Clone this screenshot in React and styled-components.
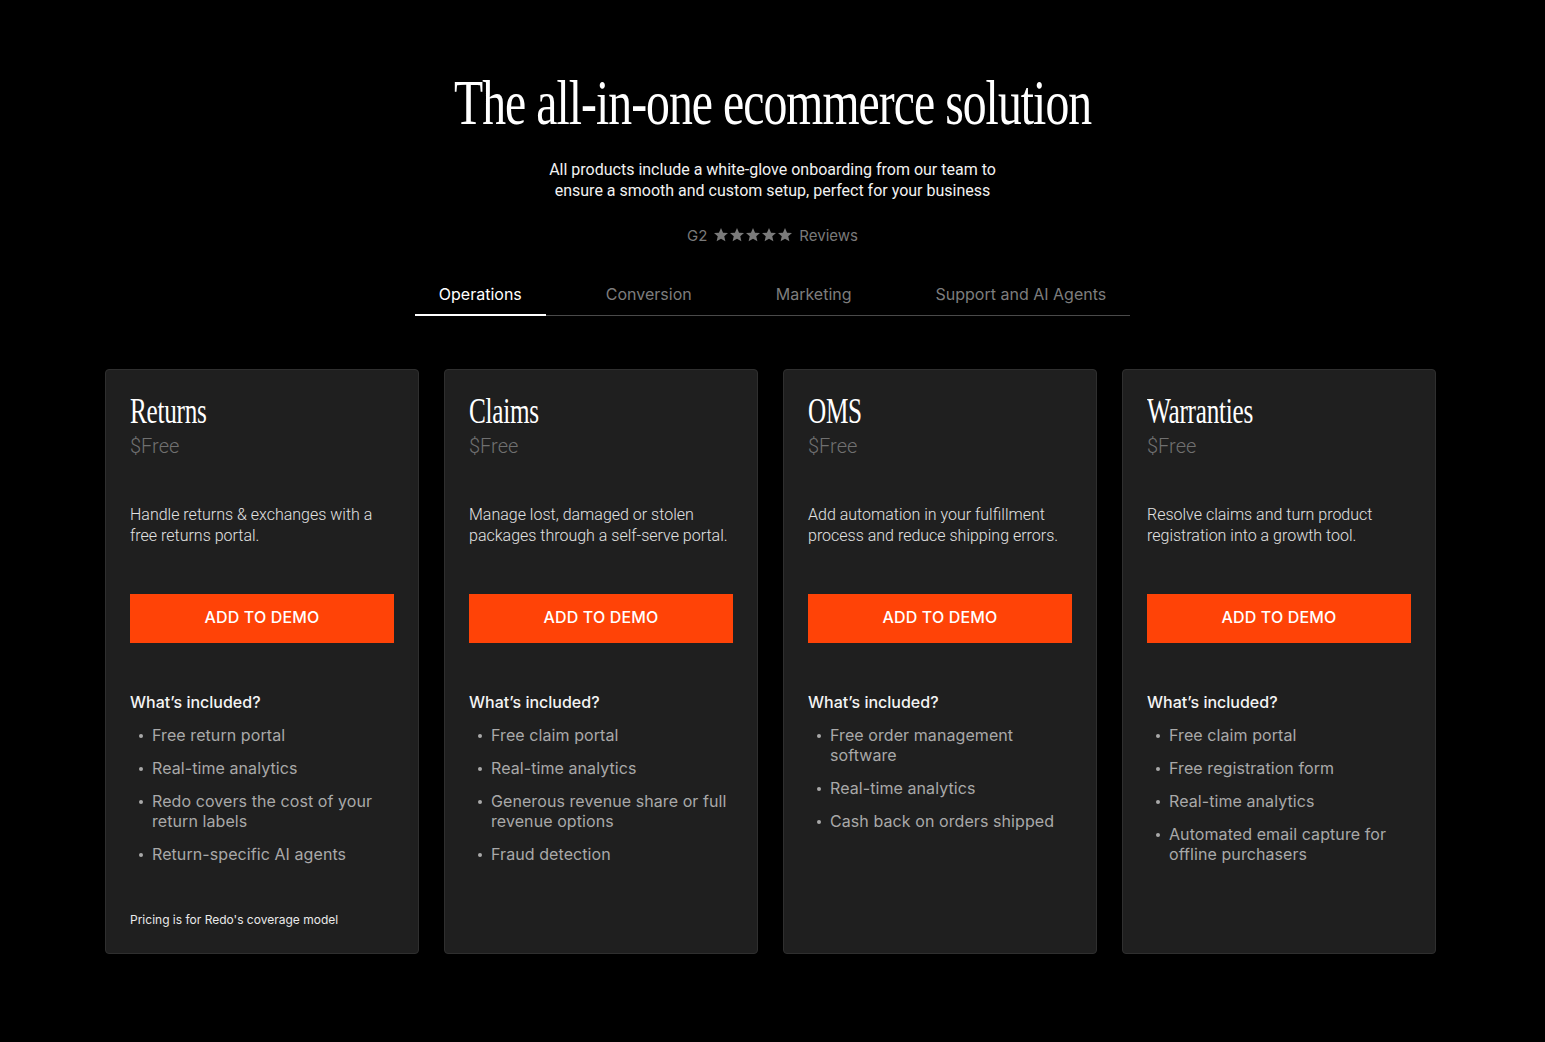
import React from "react";
import styled, { createGlobalStyle } from "styled-components";

const GlobalStyle = createGlobalStyle`
  html, body {
    margin: 0;
    padding: 0;
    background: #000;
  }
  * {
    box-sizing: border-box;
  }
`;

const Page = styled.main`
  min-height: 1042px;
  background: #000;
  padding-top: 68px;
  display: flex;
  flex-direction: column;
  align-items: center;
`;

const Title = styled.h1`
  margin: 0;
  font-family: "Liberation Serif", "DejaVu Serif", serif;
  font-weight: 400;
  font-size: 64px;
  line-height: 70px;
  color: #fff;
  letter-spacing: -0.02em;
  white-space: nowrap;
  transform: scaleX(0.745);
`;

const Subtitle = styled.p`
  margin: 21px 0 0;
  font-family: Roboto, "Liberation Sans", sans-serif;
  font-size: 16px;
  line-height: 21px;
  color: #f2f2f2;
  text-align: center;
`;

const Rating = styled.div`
  margin-top: 24px;
  height: 20px;
  display: flex;
  align-items: center;
  gap: 6px;
  font-family: Inter, "Liberation Sans", sans-serif;
  font-size: 15px;
  color: #7a7a7a;
`;

const Stars = styled.span`
  display: flex;
  gap: 0;
`;

const Tabs = styled.nav`
  margin-top: 39px;
  display: flex;
  gap: 36px;
  border-bottom: 1px solid #4a4a4a;
`;

const Tab = styled.button`
  all: unset;
  cursor: pointer;
  padding: 0 24px 10px;
  margin-bottom: -1px;
  font-family: Inter, "Liberation Sans", sans-serif;
  font-size: 16px;
  line-height: 20px;
  color: ${p => (p.$active ? "#fff" : "#7d7d7d")};
  border-bottom: 2px solid ${p => (p.$active ? "#fff" : "transparent")};
`;

const Grid = styled.section`
  margin: 53px 4px 0 0;
  display: grid;
  grid-template-columns: repeat(4, 314px);
  gap: 25px;
`;

const Card = styled.article`
  display: flex;
  flex-direction: column;
  padding: 24px 24px 25px;
  background: #1f1f1f;
  border: 1px solid #2f2f2f;
  border-radius: 4px;
`;

const Name = styled.h2`
  margin: 0;
  font-family: "Liberation Serif", "DejaVu Serif", serif;
  font-weight: 400;
  font-size: 36px;
  line-height: 34px;
  color: #fff;
  letter-spacing: -0.01em;
  transform: scaleX(0.7);
  transform-origin: left center;
`;

const Price = styled.div`
  margin-top: 6px;
  font-family: Roboto, "Liberation Sans", sans-serif;
  font-weight: 300;
  font-size: 20px;
  line-height: 24px;
  color: #707070;
`;

const Blurb = styled.p`
  margin: 46px 0 0;
  font-family: Roboto, "Liberation Sans", sans-serif;
  font-weight: 300;
  font-size: 16px;
  line-height: 21px;
  color: #e2e2e2;
  min-height: 42px;
`;

const DemoButton = styled.button`
  all: unset;
  box-sizing: border-box;
  cursor: pointer;
  margin-top: 48px;
  height: 49px;
  padding-bottom: 3px;
  display: flex;
  align-items: center;
  justify-content: center;
  background: #ff4307;
  color: #fff;
  font-family: Inter, "Liberation Sans", sans-serif;
  font-weight: 500;
  font-size: 16px;
  letter-spacing: 0.01em;
`;

const Included = styled.h3`
  margin: 47px 0 0;
  font-family: Inter, "Liberation Sans", sans-serif;
  font-weight: 500;
  font-size: 16px;
  line-height: 24px;
  color: #f4f4f4;
`;

const Features = styled.ul`
  margin: 11px 0 0;
  padding: 0;
  list-style: none;
  display: flex;
  flex-direction: column;
  gap: 13px;
`;

const Feature = styled.li`
  display: flex;
  align-items: flex-start;
  font-family: Inter, "Liberation Sans", sans-serif;
  font-size: 16px;
  line-height: 20px;
  letter-spacing: 0.005em;
  color: #a9a9a9;

  &::before {
    content: "";
    flex: none;
    width: 4px;
    height: 4px;
    margin: 9px 9px 0 9px;
    border-radius: 50%;
    background: #a9a9a9;
  }
`;

const Footnote = styled.p`
  margin: auto 0 0;
  padding-top: 48px;
  font-family: Inter, "Liberation Sans", sans-serif;
  font-size: 12px;
  line-height: 16px;
  color: #eaeaea;
`;

const Star = () => (
  <svg width="16" height="16" viewBox="0 0 24 24" fill="#7a7a7a">
    <path d="M12 1.5l3.09 7.03 7.41.6-5.63 4.86 1.7 7.51L12 17.6l-6.57 3.9 1.7-7.51L1.5 9.13l7.41-.6z" />
  </svg>
);

const tabs = ["Operations", "Conversion", "Marketing", "Support and AI Agents"];

const products = [
  {
    name: "Returns",
    blurb: "Handle returns & exchanges with a free returns portal.",
    features: [
      "Free return portal",
      "Real-time analytics",
      "Redo covers the cost of your return labels",
      "Return-specific AI agents",
    ],
    note: "Pricing is for Redo's coverage model",
  },
  {
    name: "Claims",
    blurb: "Manage lost, damaged or stolen packages through a self-serve portal.",
    features: [
      "Free claim portal",
      "Real-time analytics",
      "Generous revenue share or full revenue options",
      "Fraud detection",
    ],
  },
  {
    name: "OMS",
    blurb: "Add automation in your fulfillment process and reduce shipping errors.",
    features: [
      "Free order management software",
      "Real-time analytics",
      "Cash back on orders shipped",
    ],
  },
  {
    name: "Warranties",
    blurb: "Resolve claims and turn product registration into a growth tool.",
    features: [
      "Free claim portal",
      "Free registration form",
      "Real-time analytics",
      "Automated email capture for offline purchasers",
    ],
  },
];

export default function App() {
  return (
    <>
      <GlobalStyle />
      <Page>
        <Title>The all-in-one ecommerce solution</Title>
        <Subtitle>
          All products include a white-glove onboarding from our team to
          <br />
          ensure a smooth and custom setup, perfect for your business
        </Subtitle>
        <Rating>
          <span>G2</span>
          <Stars>
            {[0, 1, 2, 3, 4].map(i => (
              <Star key={i} />
            ))}
          </Stars>
          <span>Reviews</span>
        </Rating>
        <Tabs>
          {tabs.map((t, i) => (
            <Tab key={t} $active={i === 0}>
              {t}
            </Tab>
          ))}
        </Tabs>
        <Grid>
          {products.map(p => (
            <Card key={p.name}>
              <Name>{p.name}</Name>
              <Price>$Free</Price>
              <Blurb>{p.blurb}</Blurb>
              <DemoButton>ADD TO DEMO</DemoButton>
              <Included>What’s included?</Included>
              <Features>
                {p.features.map(f => (
                  <Feature key={f}>{f}</Feature>
                ))}
              </Features>
              {p.note && <Footnote>{p.note}</Footnote>}
            </Card>
          ))}
        </Grid>
      </Page>
    </>
  );
}
